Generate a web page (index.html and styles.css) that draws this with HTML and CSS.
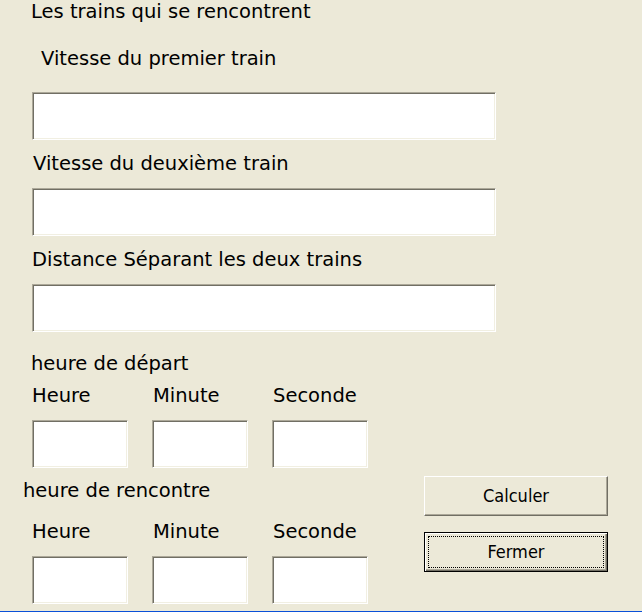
FILE: index.html
```html
<!DOCTYPE html>
<html lang="fr">
<head>
<meta charset="utf-8">
<title>Les trains qui se rencontrent</title>
<link rel="stylesheet" href="styles.css">
</head>
<body>
<main class="form">
  <h1 class="title">Les trains qui se rencontrent</h1>

  <label class="label label-first" for="v1">Vitesse du premier train</label>
  <input class="field field-wide field-first" id="v1" type="text">

  <label class="label label-v" for="v2">Vitesse du deuxième train</label>
  <input class="field field-wide" id="v2" type="text">

  <label class="label label-d" for="dist">Distance Séparant les deux trains</label>
  <input class="field field-wide" id="dist" type="text">

  <p class="label label-section">heure de départ</p>
  <div class="time-grid">
    <span class="col-label col-h">Heure</span>
    <span class="col-label col-m">Minute</span>
    <span class="col-label col-s">Seconde</span>
    <input class="field field-small" type="text" aria-label="Heure de départ">
    <input class="field field-small" type="text" aria-label="Minute de départ">
    <input class="field field-small" type="text" aria-label="Seconde de départ">
  </div>

  <div class="bottom">
    <div class="bottom-left">
      <p class="label label-meet">heure de rencontre</p>
      <div class="time-grid time-grid-meet">
        <span class="col-label col-h">Heure</span>
        <span class="col-label col-m">Minute</span>
        <span class="col-label col-s">Seconde</span>
        <input class="field field-small" type="text" aria-label="Heure de rencontre">
        <input class="field field-small" type="text" aria-label="Minute de rencontre">
        <input class="field field-small" type="text" aria-label="Seconde de rencontre">
      </div>
    </div>
    <div class="actions">
      <button class="btn" type="button">Calculer</button>
      <button class="btn btn-default" type="button">Fermer</button>
    </div>
  </div>
</main>
</body>
</html>
```

FILE: styles.css
```css
html {
  background: #ece9d8;
}

body {
  margin: 0;
  height: 611px;
  overflow: hidden;
  border-bottom: 1px solid #0a50d8;
  background: #ece9d8;
  color: #000;
  font-family: "DejaVu Sans", "Liberation Sans", sans-serif;
  font-size: 19.5px;
  line-height: 22px;
}

.form {
  display: flex;
  flex-direction: column;
  align-items: flex-start;
  padding-left: 30px;
}

.title {
  margin: 1px 0 0 1px;
  font-size: 19.5px;
  font-weight: normal;
  line-height: 22px;
}

.label {
  display: block;
  margin: 13px 0 0 0;
  height: 22px;
  white-space: nowrap;
}

.label-first {
  margin-top: 25px;
  padding-left: 11px;
}

.label-v {
  padding-left: 3px;
}

.label-d {
  padding-left: 2px;
}

.label-section {
  margin-top: 21px;
  padding-left: 1px;
}

.field {
  box-sizing: border-box;
  margin: 0;
  padding: 2px 4px;
  background: #fff;
  border: 1px solid;
  border-color: #aca899 #fff #fff #aca899;
  box-shadow: inset 1px 1px 0 #716f64, inset -1px -1px 0 #f1efe2;
  font: inherit;
  outline: none;
}

.field-wide {
  width: 464px;
  height: 48px;
  margin-top: 13px;
  margin-left: 2px;
}

.field-first {
  margin-top: 22px;
}

.time-grid {
  display: grid;
  grid-template-columns: repeat(3, 96px);
  column-gap: 24px;
  row-gap: 13px;
  margin-top: 10px;
  margin-left: 2px;
}

.time-grid-meet {
  margin-top: 19px;
}

.col-label {
  height: 22px;
  white-space: nowrap;
}

.col-h {
  margin-left: 0;
}

.col-m {
  margin-left: 1px;
}

.col-s {
  margin-left: 1px;
}

.field-small {
  width: 96px;
  height: 48px;
}

.bottom {
  display: flex;
  align-items: flex-start;
  column-gap: 56px;
}

.label-meet {
  margin-top: 12px;
  margin-left: -7px;
}

.actions {
  display: flex;
  flex-direction: column;
  gap: 16px;
  padding-top: 8px;
}

.btn {
  box-sizing: border-box;
  width: 184px;
  height: 40px;
  margin: 0;
  padding: 0;
  background: #ece9d8;
  color: #000;
  border: 1px solid;
  border-color: #fff #716f64 #716f64 #fff;
  box-shadow: inset -1px -1px 0 #aca899;
  font-family: "DejaVu Sans Condensed", "DejaVu Sans", sans-serif;
  font-size: 18px;
  line-height: 20px;
  cursor: default;
}

.btn-default {
  border: 1px solid #000;
  box-shadow: inset 1px 1px 0 #fff, inset -1px -1px 0 #716f64, inset -2px -2px 0 #aca899;
  outline: 1px dotted #000;
  outline-offset: -5px;
}
```
